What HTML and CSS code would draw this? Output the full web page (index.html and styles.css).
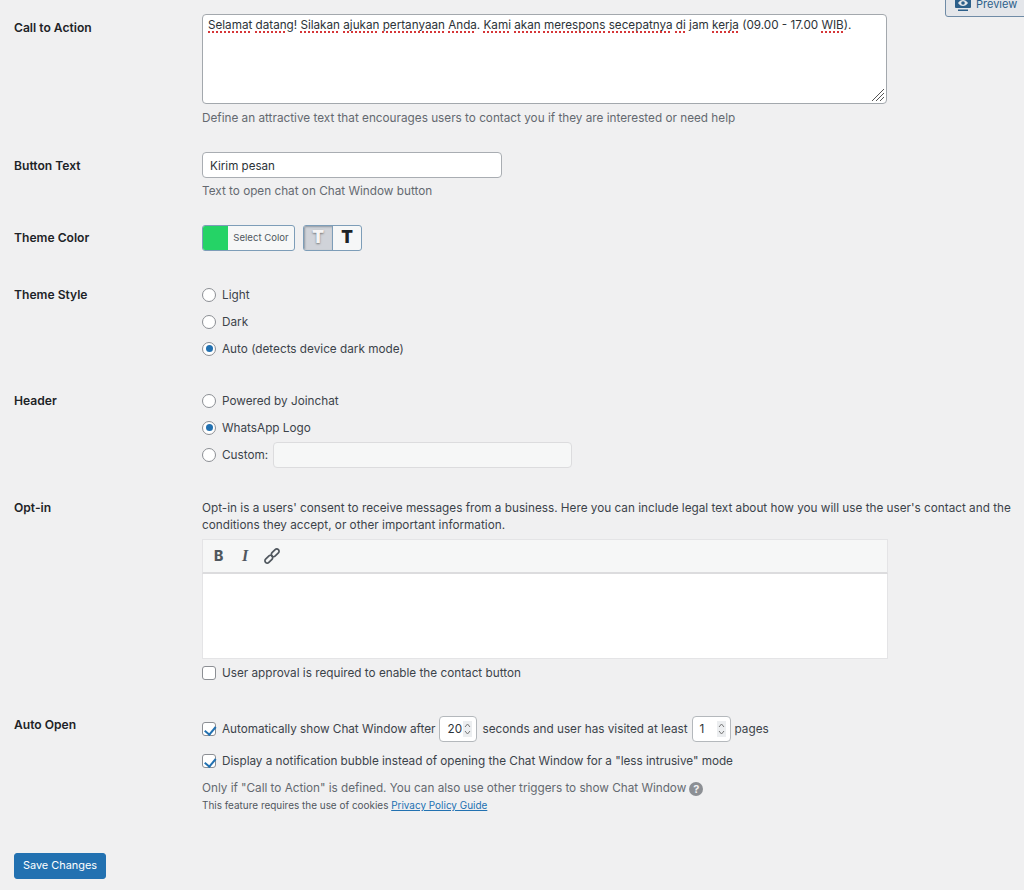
FILE: index.html
```html
<!DOCTYPE html>
<html lang="en">
<head>
<meta charset="utf-8">
<title>Joinchat settings</title>
<link rel="stylesheet" href="styles.css">
</head>
<body>
<a class="preview" href="#">
  <svg class="preview-icon" width="16" height="14" viewBox="0 0 16 14"><path d="M1 0h14a1 1 0 0 1 1 1v8a1 1 0 0 1-1 1H1a1 1 0 0 1-1-1V1a1 1 0 0 1 1-1z" fill="#2c5f8a"/><path d="M3 5c1.400-2 3-3 5-3s3.600 1 5 3c-1.400 2-3 3-5 3S4.400 7 3 5z" fill="#e4e6ea"/><circle cx="8" cy="5" r="1.800" fill="#2c5f8a"/><rect x="3" y="11.500" width="10" height="1.500" fill="#2c5f8a"/></svg>
  <span>Preview</span>
</a>
<main class="page">
  <section class="row row-cta">
    <h2 class="label">Call to Action</h2>
    <div class="field">
      <div class="textarea">
        <p class="textarea-text"><span class="sp">Selamat</span> <span class="sp">datang</span>! <span class="sp">Silakan</span> <span class="sp">ajukan</span> <span class="sp">pertanyaan</span> <span class="sp">Anda</span>. <span class="sp">Kami</span> <span class="sp">akan</span> <span class="sp">merespons</span> <span class="sp">secepatnya</span> <span class="sp">di</span> jam <span class="sp">kerja</span> (09.00 - 17.00 <span class="sp">WIB</span>).</p>
        <svg class="grip" width="14" height="14" viewBox="0 0 14 14"><path d="M1 13 13 1M5 13l8-8M9 13l4-4" stroke="#555" stroke-width="1" fill="none"/></svg>
      </div>
      <p class="desc desc-cta">Define an attractive text that encourages users to contact you if they are interested or need help</p>
    </div>
  </section>

  <section class="row row-button">
    <h2 class="label">Button Text</h2>
    <div class="field">
      <input class="text-input" type="text" value="Kirim pesan">
      <p class="desc desc-button">Text to open chat on Chat Window button</p>
    </div>
  </section>

  <section class="row row-color">
    <h2 class="label">Theme Color</h2>
    <div class="field color-tools">
      <div class="color-button"><span class="swatch"></span><span class="color-text">Select Color</span></div>
      <div class="t-group"><span class="t t-light">T</span><span class="t t-dark">T</span></div>
    </div>
  </section>

  <section class="row row-style">
    <h2 class="label">Theme Style</h2>
    <div class="field options">
      <label class="option"><input type="radio" name="style"><span class="opt-text">Light</span></label>
      <label class="option"><input type="radio" name="style"><span class="opt-text">Dark</span></label>
      <label class="option"><input type="radio" name="style" checked><span class="opt-text">Auto (detects device dark mode)</span></label>
    </div>
  </section>

  <section class="row row-header">
    <h2 class="label">Header</h2>
    <div class="field options">
      <label class="option"><input type="radio" name="header"><span class="opt-text">Powered by Joinchat</span></label>
      <label class="option"><input type="radio" name="header" checked><span class="opt-text">WhatsApp Logo</span></label>
      <label class="option option-custom"><input type="radio" name="header"><span class="opt-text">Custom:</span><span class="custom-input"></span></label>
    </div>
  </section>

  <section class="row row-optin">
    <h2 class="label">Opt-in</h2>
    <div class="field">
      <p class="optin-text">Opt-in is a users' consent to receive messages from a business. Here you can include legal text about how you will use the user's contact and the conditions they accept, or other important information.</p>
      <div class="editor">
        <div class="toolbar">
          <span class="tool tool-b">B</span>
          <span class="tool tool-i">I</span>
          <svg class="tool-link" width="16" height="16" viewBox="0 0 16 16"><g fill="none" stroke="#50575e" stroke-width="1.700"><rect x="-4.800" y="-2.300" width="9" height="4.600" rx="2.300" transform="translate(5 11) rotate(-45)"/><rect x="-4.200" y="-2.300" width="9" height="4.600" rx="2.300" transform="translate(11 5) rotate(-45)"/></g></svg>
        </div>
        <div class="editor-body"></div>
      </div>
      <label class="option option-approval"><input type="checkbox"><span class="opt-text">User approval is required to enable the contact button</span></label>
    </div>
  </section>

  <section class="row row-auto">
    <h2 class="label">Auto Open</h2>
    <div class="field">
      <div class="option option-numbers">
        <input type="checkbox" checked>
        <span class="opt-text">Automatically show Chat Window after</span>
        <span class="number number-first"><span>20</span><svg class="spin" width="9" height="16" viewBox="0 0 9 16"><path d="M2 6l2.500-3L7 6M2 10l2.500 3L7 10" fill="none" stroke="#777" stroke-width="1"/></svg></span>
        <span class="opt-text">seconds and user has visited at least</span>
        <span class="number"><span>1</span><svg class="spin" width="9" height="16" viewBox="0 0 9 16"><path d="M2 6l2.500-3L7 6M2 10l2.500 3L7 10" fill="none" stroke="#777" stroke-width="1"/></svg></span>
        <span class="opt-text">pages</span>
      </div>
      <label class="option option-bubble"><input type="checkbox" checked><span class="opt-text">Display a notification bubble instead of opening the Chat Window for a "less intrusive" mode</span></label>
      <p class="desc desc-only">Only if "Call to Action" is defined. You can also use other triggers to show Chat Window <span class="help">?</span></p>
      <p class="small">This feature requires the use of cookies <a href="#">Privacy Policy Guide</a></p>
    </div>
  </section>

  <button class="save" type="button">Save Changes</button>
</main>
</body>
</html>
```

FILE: styles.css
```css
* { box-sizing: border-box; }
html, body { margin: 0; padding: 0; height: 890px; overflow: hidden; }
body {
  background: #f0f0f1;
  color: #3c434a;
  font-family: Inter, "Liberation Sans", sans-serif;
  font-size: 11.75px;
  line-height: 17px;
  position: relative;
}
p, h2 { margin: 0; }

.preview {
  position: absolute;
  left: 945px;
  top: -8px;
  width: 90px;
  height: 25px;
  display: flex;
  align-items: center;
  gap: 5px;
  padding-left: 9px;
  background: #e4e6ea;
  border: 1px solid #6f8ba6;
  border-radius: 3px;
  color: #2c5f8a;
  font-size: 11px;
  text-decoration: none;
}

.page { padding: 14px 0 0 14px; }
.row { display: flex; }
.label {
  width: 188px;
  flex: none;
  font-size: 12.1px;
  font-weight: 600;
  line-height: 17px;
  color: #1d2327;
}
.field { flex: none; width: 822px; }

.row-cta { height: 138px; }
.row-cta .label { padding-top: 5px; }
.textarea {
  position: relative;
  width: 685px;
  height: 90px;
  background: #fff;
  border: 1px solid #a3a8ad;
  border-radius: 4px;
  padding: 2px 5px;
}
.textarea-text { color: #2c3338; font-size: 11.68px; }
.sp { text-decoration: underline dotted #d63638 1.5px; text-underline-offset: 2px; }
.grip { position: absolute; right: 1px; bottom: 1px; }
.desc { color: #646970; }
.desc-cta { margin-top: 6px; }

.row-button { height: 73px; }
.row-button .label { padding-top: 5px; }
.text-input {
  display: block;
  width: 300px;
  height: 26px;
  padding: 1px 7px 0;
  background: #fff;
  border: 1px solid #a9adb2;
  border-radius: 4px;
  color: #2c3338;
  font: inherit;
  font-size: 11.6px;
}
.desc-button { margin-top: 5px; }

.row-color { height: 56px; }
.row-color .label { padding-top: 4px; }
.color-tools { display: flex; gap: 8px; align-items: flex-start; }
.color-button {
  display: flex;
  width: 93px;
  height: 26px;
  background: #f6f7f7;
  border: 1px solid #7d9db8;
  border-radius: 3px;
  overflow: hidden;
}
.swatch { width: 25px; background: #25d366; }
.color-text { flex: 1; text-align: center; font-size: 9.6px; line-height: 24px; color: #50575e; }
.t-group {
  display: flex;
  width: 59px;
  height: 26px;
  border: 1px solid #7d9db8;
  border-radius: 3px;
  overflow: hidden;
  background: #f6f7f7;
}
.t { flex: 1; text-align: center; font-size: 17px; font-weight: 900; line-height: 23px; }
.t-light { background: #d0d3d9; color: #f4f4f5; border-right: 1px solid #7d9db8; box-shadow: inset 1px 1px 2px #8f98a3; text-shadow: 0 1px 2px #777; }
.t-dark { color: #1d2327; }

.row-style { height: 106px; margin-top: 5px; }
.row-header { height: 108px; }
.options { display: flex; flex-direction: column; gap: 10px; }
.option { display: flex; align-items: center; gap: 6px; }
.opt-text { white-space: nowrap; padding-top: 1px; }

input[type="radio"], input[type="checkbox"] {
  appearance: none;
  flex: none;
  width: 14px;
  height: 14px;
  margin: 0;
  background: #fff;
  border: 1px solid #8c8f94;
  position: relative;
}
input[type="radio"] { border-radius: 50%; }
input[type="radio"]:checked::before {
  content: "";
  position: absolute;
  left: 2.500px;
  top: 2.500px;
  width: 7px;
  height: 7px;
  border-radius: 50%;
  background: #2271b1;
}
input[type="checkbox"] { border-radius: 3px; }
input[type="checkbox"]:checked::before {
  content: "";
  position: absolute;
  left: 3.800px;
  top: 0.800px;
  width: 4.500px;
  height: 8.500px;
  border: solid #2271b1;
  border-width: 0 2px 2px 0;
  transform: rotate(40deg);
}
.options .option { height: 17px; }
.options .option-custom { height: 26px; margin-top: -4px; }
.custom-input {
  width: 299px;
  height: 26px;
  margin-left: -1px;
  background: #f6f7f7;
  border: 1px solid #dcdcde;
  border-radius: 4px;
}

.row-optin { height: 217px; }
.row-optin .label { margin-top: -1px; }
.optin-text { margin-top: 0; }
.editor { width: 686px; margin-top: 5px; }
.toolbar {
  display: flex;
  align-items: center;
  height: 35px;
  padding-left: 11px;
  background: #f6f7f7;
  border: 1px solid #e4e4e6;
  border-bottom: 2px solid #dcdcde;
}
.tool { width: 26px; color: #50575e; font-size: 14px; line-height: 16px; }
.tool-b { font-weight: 800; }
.tool-i { font-family: "Liberation Serif", serif; font-style: italic; font-weight: 700; font-size: 16px; padding-left: 2px; }
.tool-link { margin-left: -2px; }
.editor-body { height: 85px; background: #fff; border: 1px solid #e4e4e6; border-top: 0; }
.option-approval { margin-top: 5px; }

.row-auto { height: 136px; }
.option-numbers { height: 26px; gap: 4px; margin-top: -1px; }
.row-auto .label { margin-top: -1px; }
.number {
  display: flex;
  align-items: center;
  justify-content: space-between;
  width: 39px;
  height: 26px;
  padding: 0 4px 0 7px;
  background: #fff;
  border: 1px solid #b4b8bc;
  border-radius: 4px;
  color: #2c3338;
}
.number-first { width: 38px; margin-right: 1px; }
.option-numbers > input { margin-right: 2px; }
.option-numbers .opt-text:nth-of-type(1) { letter-spacing: -0.03px; }
.spin { background: #eceef0; flex: none; }
.option-bubble { margin-top: 10px; letter-spacing: -0.02px; }
.desc-only { margin-top: 10px; display: flex; align-items: center; gap: 3px; letter-spacing: -0.02px; }
.help {
  display: inline-block;
  width: 14px;
  height: 14px;
  border-radius: 50%;
  background: #8c8f94;
  color: #f0f0f1;
  font-size: 11px;
  font-weight: 700;
  line-height: 14px;
  text-align: center;
}
.small { margin-top: 0; font-size: 9.95px; color: #50575e; }
.small a { color: #2271b1; }

.save {
  display: block;
  width: 92px;
  height: 26px;
  padding: 0 0 1px;
  background: #2271b1;
  border: 1px solid #2271b1;
  border-radius: 3px;
  color: #fff;
  font: inherit;
  font-size: 10.9px;
}
```
